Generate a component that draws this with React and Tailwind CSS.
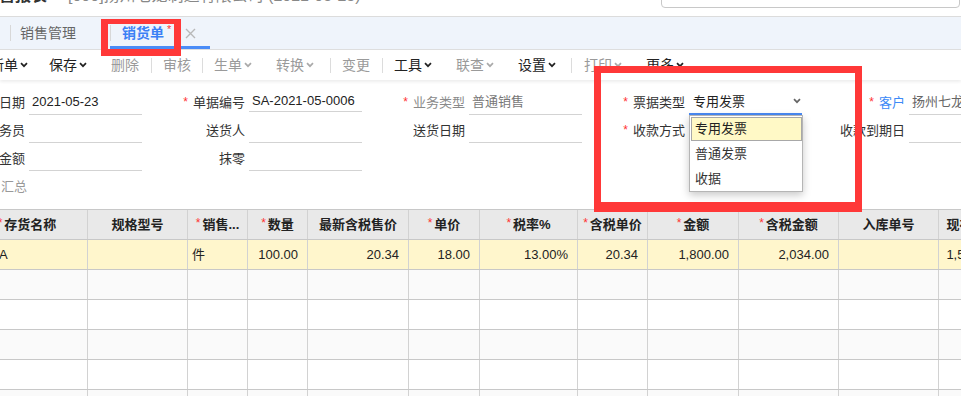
import React from 'react';

const FONT = "font-['Liberation_Sans','Noto_Sans_CJK_SC',sans-serif]";

function Chevron({ className = '' }) {
  return (
    <svg width="8" height="6" viewBox="0 0 8 6" className={className}>
      <path d="M1 1.2l3 3 3-3" fill="none" stroke="currentColor" strokeWidth="1.7" />
    </svg>
  );
}

const tools = [
  { t: '新单', dd: true, on: true, cls: 'ml-[-10px]' },
  { t: '保存', dd: true, on: true, cls: 'ml-[21px]' },
  { t: '删除', cls: 'ml-[24px]' },
  { sep: true, cls: 'ml-[12px]' },
  { t: '审核', cls: 'ml-[11px]' },
  { sep: true, cls: 'ml-[11px]' },
  { t: '生单', dd: true, cls: 'ml-[11px]' },
  { t: '转换', dd: true, cls: 'ml-[24px]' },
  { sep: true, cls: 'ml-[16px]' },
  { t: '变更', cls: 'ml-[11px]' },
  { sep: true, cls: 'ml-[12px]' },
  { t: '工具', dd: true, on: true, cls: 'ml-[11px]' },
  { t: '联查', dd: true, cls: 'ml-[24px]' },
  { t: '设置', dd: true, on: true, cls: 'ml-[24px]' },
  { sep: true, cls: 'ml-[15px]' },
  { t: '打印', dd: true, cls: 'ml-[12px]' },
  { t: '更多', dd: true, on: true, cls: 'ml-[24px]' },
];

function Label({ req, text, color = 'text-[#333]' }) {
  return (
    <div className="w-[103px] shrink-0 pr-[4px] flex items-center justify-end">
      {req && <span className="text-[#f33] text-[12px] mr-[5px] leading-none mt-[-2px]">*</span>}
      <span className={color}>{text}</span>
    </div>
  );
}

function Field({ req, label, value, labelColor, valueColor = 'text-[#222]', extra = '' }) {
  return (
    <div className="flex w-[216px] shrink-0 h-[25px]">
      <Label req={req} text={label} color={labelColor} />
      <div className={`w-[113px] shrink-0 border-b border-[#d3d3d3] pl-[3px] flex items-center whitespace-nowrap overflow-hidden ${valueColor} ${extra}`}>
        {value}
      </div>
    </div>
  );
}

function SelectField() {
  return (
    <div className="flex w-[216px] shrink-0 h-[25px]">
      <Label req text="票据类型" />
      <div className="relative w-[113px] shrink-0">
        <div className="h-[25px] border-b-2 border-[#4a8af4] pl-[4px] pr-[1px] flex items-center justify-between text-[#222]">
          <span>专用发票</span>
          <Chevron className="text-[#666] mb-[2px]" />
        </div>
        <div className="absolute left-0 top-full w-[114px] z-10 bg-white border border-[#b5b5b5] pt-[1px] pl-[1px] shadow-[0_3px_8px_rgba(0,0,0,0.22)]">
          <div className="h-[24px] border border-[#a8a8a8] bg-[#fff9c6] pl-[3px] flex items-center text-[#222]">专用发票</div>
          <div className="h-[25px] pl-[4px] flex items-center text-[#333]">普通发票</div>
          <div className="h-[25px] pl-[4px] flex items-center text-[#333]">收据</div>
        </div>
      </div>
    </div>
  );
}

function Empty() {
  return <div className="w-[216px] shrink-0 h-[25px]" />;
}

const cols = [
  { w: 'w-[121px]', h: '存货名称', req: true },
  { w: 'w-[100px]', h: '规格型号' },
  { w: 'w-[60px]', h: '销售...', req: true },
  { w: 'w-[60px]', h: '数量', req: true },
  { w: 'w-[101px]', h: '最新含税售价' },
  { w: 'w-[71px]', h: '单价', req: true },
  { w: 'w-[98px]', h: '税率%', req: true },
  { w: 'w-[70px]', h: '含税单价', req: true },
  { w: 'w-[91px]', h: '金额', req: true },
  { w: 'w-[100px]', h: '含税金额', req: true },
  { w: 'w-[100px]', h: '入库单号' },
  { w: 'w-[68px]', h: '现存数量' },
];

const row1 = [
  { v: '存货A', a: 'justify-start pl-[6px]' },
  { v: '' },
  { v: '件', a: 'justify-start pl-[4px]' },
  { v: '100.00' },
  { v: '20.34' },
  { v: '18.00' },
  { v: '13.00%' },
  { v: '20.34' },
  { v: '1,800.00' },
  { v: '2,034.00' },
  { v: '' },
  { v: '1,500.00' },
];

const emptyRows = ['bg-[#fafafa]', 'bg-white', 'bg-[#fafafa]', 'bg-white', 'bg-[#fafafa]'];

export default function App() {
  return (
    <div className={`relative w-[961px] h-[396px] overflow-hidden bg-white text-[13px] ${FONT}`}>
      {/* top header, mostly scrolled off */}
      <div className="h-[17px] flex items-start overflow-hidden border-b border-[#dcdcdc] bg-white">
        <div className="mt-[-13px] text-[16px] font-bold text-[#333] whitespace-nowrap leading-[17px] ml-[-17px]">销售报表</div>
        <div className="mt-[-13px] ml-[21px] text-[16px] text-[#888] whitespace-nowrap leading-[17px]">[000]扬州七龙制造有限公司 (2021-05-23)</div>
        <div className="ml-auto mr-[1px] mt-[-20px] w-[299px] h-[28px] border border-[#c8c8c8] rounded-[4px] shrink-0" />
      </div>

      {/* tab bar */}
      <div className="h-[33px] bg-[#eff4fb] border-b border-[#dedede] flex items-stretch">
        <div className="ml-[10px] w-[100px] flex items-center">
          <div className="w-px h-[16px] bg-[#d8d8d8]" />
          <span className="ml-[9px] text-[14px] text-[#666]">销售管理</span>
        </div>
        <div className="relative w-[100px] flex items-center">
          <div className="w-px h-[16px] bg-[#d8d8d8]" />
          <span className="ml-[11px] text-[14px] font-bold text-[#3b80f5]">销货单</span>
          <span className="ml-[3px] mt-[-8px] text-[11px] text-[#f33] leading-none">*</span>
          <svg width="11" height="11" viewBox="0 0 11 11" className="ml-[14px] text-[#b8b8b8]">
            <path d="M1 1l9 9M10 1l-9 9" stroke="currentColor" strokeWidth="1.4" fill="none" />
          </svg>
          <div className="absolute left-0 right-0 bottom-0 h-[3px] bg-[#4a8cf7]" />
        </div>
      </div>

      {/* toolbar */}
      <div className="h-[30px] flex items-center text-[14px] whitespace-nowrap shadow-[0_2px_3px_rgba(0,0,0,0.07)] relative">
        {tools.map((it, i) =>
          it.sep ? (
            <div key={i} className={`w-px h-[15px] bg-[#dcdcdc] shrink-0 ${it.cls}`} />
          ) : (
            <div key={i} className={`flex items-center shrink-0 ${it.cls} ${it.on ? 'text-[#222]' : 'text-[#9a9a9a]'}`}>
              <span>{it.t}</span>
              {it.dd && <Chevron className={`ml-[2px] ${it.on ? 'text-[#222]' : 'text-[#aaa]'}`} />}
            </div>
          )
        )}
      </div>

      {/* header form */}
      <div className="ml-[-74px] pt-[10px] flex flex-col gap-[3px]">
        <div className="flex gap-[4px]">
          <Field label="单据日期" value="2021-05-23" />
          <Field req label="单据编号" value="SA-2021-05-0006" extra="mb-[3px]" />
          <Field req label="业务类型" value="普通销售" labelColor="text-[#8a8a8a]" valueColor="text-[#777]" />
          <SelectField />
          <Field req label="客户" value="扬州七龙制造有限公司" labelColor="text-[#3d8af7]" valueColor="text-[#666]" />
        </div>
        <div className="flex gap-[4px]">
          <Field label="业务员" value="" />
          <Field label="送货人" value="" />
          <Field label="送货日期" value="" />
          <div className="flex w-[216px] shrink-0 h-[25px]">
            <Label req text="收款方式" />
            <div className="w-[113px] shrink-0 border-b border-[#d3d3d3]" />
          </div>
          <Field label="收款到期日" value="" />
        </div>
        <div className="flex gap-[4px]">
          <Field label="现结金额" value="" />
          <Field label="抹零" value="" />
          <Empty />
        </div>
        <div className="h-[25px] flex items-center">
          <span className="ml-[75px] text-[#999]">汇总</span>
        </div>
      </div>

      {/* grid */}
      <div className="mt-[10px] ml-[-33px] border-t border-[#c8c8c8]">
        <div className="flex h-[30px] bg-[#e9e9e9] border-b border-[#c8c8c8]">
          {cols.map((c, i) => (
            <div key={i} className={`${c.w} shrink-0 border-r border-[#d2d2d2] flex items-center justify-center font-bold text-[#222] whitespace-nowrap overflow-hidden`}>
              {c.req && <span className="text-[#f33] font-normal mr-[2px] mt-[-4px] text-[12px]">*</span>}
              <span>{c.h}</span>
            </div>
          ))}
        </div>
        <div className="flex h-[30px] bg-[#fff6cc] border-b border-[#c8c8c8]">
          {cols.map((c, i) => (
            <div key={i} className={`${c.w} shrink-0 border-r border-[#d2d2d2] flex items-center whitespace-nowrap overflow-hidden text-[#222] ${row1[i].a || 'justify-end pr-[9px]'}`}>
              {row1[i].v}
            </div>
          ))}
        </div>
        {emptyRows.map((bg, r) => (
          <div key={r} className={`flex h-[30px] ${bg} border-b border-[#c8c8c8]`}>
            {cols.map((c, i) => (
              <div key={i} className={`${c.w} shrink-0 border-r border-[#d2d2d2]`} />
            ))}
          </div>
        ))}
      </div>

      {/* annotation boxes */}
      <div className="absolute left-[101px] top-[19px] w-[80px] h-[37px] border-x-[7px] border-t-[5px] border-b-[7px] border-[#ff3838] pointer-events-none" />
      <div className="absolute left-[594px] top-[66px] w-[268px] h-[146px] border-[7px] border-b-[10px] border-[#ff3838] pointer-events-none" />
    </div>
  );
}
